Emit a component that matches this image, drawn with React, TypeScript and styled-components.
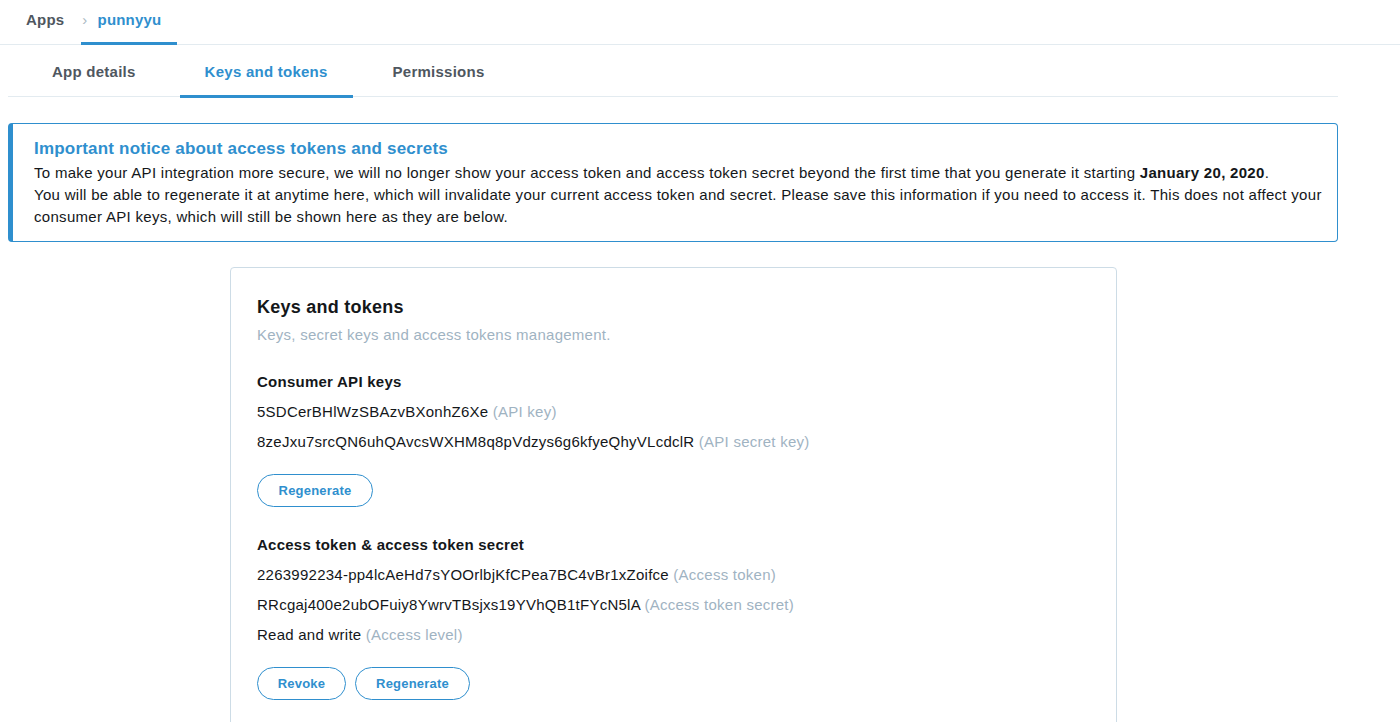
import styled, { createGlobalStyle } from "styled-components";

const blue = "#2f8fce";
const ink = "#14171a";
const muted = "#9fb3c2";

const GlobalStyle = createGlobalStyle`
  body {
    margin: 0;
    background: #fff;
    font-family: "Liberation Sans", Arial, sans-serif;
    color: ${ink};
  }
`;

const Page = styled.div`
  width: 1400px;
  height: 722px;
  overflow: hidden;
`;

const Breadcrumb = styled.div`
  display: flex;
  align-items: stretch;
  height: 44px;
  padding-left: 26px;
  border-bottom: 1px solid #e3ebf0;
`;

const Crumb = styled.div<{ $active?: boolean }>`
  display: flex;
  align-items: flex-start;
  padding: ${(p) => (p.$active ? "11px 16px 0 1px" : "11px 0 0 0")};
  margin-left: ${(p) => (p.$active ? "17px" : "0")};
  font-size: 15px;
  font-weight: bold;
  letter-spacing: 0.2px;
  color: ${(p) => (p.$active ? blue : "#4f5760")};
  border-bottom: 3px solid ${(p) => (p.$active ? blue : "transparent")};
  margin-bottom: -1px;
`;

const Chevron = styled.span`
  color: #aab8c2;
  font-weight: normal;
  margin-right: 10px;
`;

const Tabs = styled.div`
  display: flex;
  margin: 0 62px 0 8px;
  height: 51px;
  border-bottom: 1px solid #e3ebf0;
`;

const Tab = styled.div<{ $active?: boolean }>`
  display: flex;
  align-items: center;
  padding: 2px ${(p) => (p.$active ? "25px" : "44px")} 0;
  font-size: 15px;
  font-weight: bold;
  letter-spacing: 0.25px;
  color: ${(p) => (p.$active ? blue : "#4f5760")};
  border-bottom: 3px solid ${(p) => (p.$active ? blue : "transparent")};
  margin-bottom: -2px;
  &:last-child {
    padding-left: 40px;
  }
`;

const Notice = styled.div`
  margin: 26px 62px 0 8px;
  border: 1px solid ${blue};
  border-left: 5px solid ${blue};
  border-radius: 4px;
  padding: 14px 6px 13px 21px;
`;

const NoticeTitle = styled.div`
  font-size: 17px;
  font-weight: bold;
  letter-spacing: 0.2px;
  color: ${blue};
  line-height: 22px;
  margin-bottom: 2px;
`;

const NoticeText = styled.p`
  margin: 0;
  font-size: 15px;
  letter-spacing: 0.3px;
  line-height: 22px;
  color: ${ink};
`;

const Card = styled.div`
  margin: 25px 0 0 230px;
  width: 887px;
  box-sizing: border-box;
  border: 1px solid #cddce6;
  border-radius: 4px;
  padding: 27px 26px 40px 26px;
  letter-spacing: 0.25px;
`;

const CardTitle = styled.h2`
  margin: 0;
  font-size: 18px;
  font-weight: bold;
  line-height: 24px;
`;

const CardSub = styled.div`
  margin-top: 4px;
  font-size: 15px;
  line-height: 24px;
  color: ${muted};
`;

const SectionTitle = styled.h3<{ $gap: number }>`
  margin: ${(p) => p.$gap}px 0 0;
  font-size: 15px;
  font-weight: bold;
  line-height: 24px;
`;

const KeyRow = styled.div`
  margin-top: 6px;
  font-size: 15px;
  line-height: 24px;
  color: ${ink};
`;

const Hint = styled.span`
  color: ${muted};
`;

const Buttons = styled.div`
  display: flex;
  gap: 9px;
  margin-top: 20px;
`;

const PillButton = styled.button<{ $w: number }>`
  width: ${(p) => p.$w}px;
  height: 33px;
  border: 1px solid ${blue};
  border-radius: 17px;
  background: #fff;
  color: ${blue};
  font-family: "Liberation Sans", Arial, sans-serif;
  font-size: 13px;
  font-weight: bold;
  letter-spacing: 0.2px;
  cursor: pointer;
`;

export default function App() {
  return (
    <Page>
      <GlobalStyle />
      <Breadcrumb>
        <Crumb>Apps</Crumb>
        <Crumb $active>
          <Chevron>›</Chevron>
          punnyyu
        </Crumb>
      </Breadcrumb>
      <Tabs>
        <Tab>App details</Tab>
        <Tab $active>Keys and tokens</Tab>
        <Tab>Permissions</Tab>
      </Tabs>
      <Notice>
        <NoticeTitle>Important notice about access tokens and secrets</NoticeTitle>
        <NoticeText>
          To make your API integration more secure, we will no longer show your
          access token and access token secret beyond the first time that you
          generate it starting <b>January 20, 2020</b>.
          <br />
          You will be able to regenerate it at anytime here, which will
          invalidate your current access token and secret. Please save this
          information if you need to access it. This does not affect your
          consumer API keys, which will still be shown here as they are below.
        </NoticeText>
      </Notice>
      <Card>
        <CardTitle>Keys and tokens</CardTitle>
        <CardSub>Keys, secret keys and access tokens management.</CardSub>
        <SectionTitle $gap={23}>Consumer API keys</SectionTitle>
        <KeyRow>
          5SDCerBHlWzSBAzvBXonhZ6Xe <Hint>(API key)</Hint>
        </KeyRow>
        <KeyRow>
          8zeJxu7srcQN6uhQAvcsWXHM8q8pVdzys6g6kfyeQhyVLcdclR{" "}
          <Hint>(API secret key)</Hint>
        </KeyRow>
        <Buttons>
          <PillButton $w={116}>Regenerate</PillButton>
        </Buttons>
        <SectionTitle $gap={26}>Access token &amp; access token secret</SectionTitle>
        <KeyRow>
          2263992234-pp4lcAeHd7sYOOrlbjKfCPea7BC4vBr1xZoifce{" "}
          <Hint>(Access token)</Hint>
        </KeyRow>
        <KeyRow>
          RRcgaj400e2ubOFuiy8YwrvTBsjxs19YVhQB1tFYcN5lA{" "}
          <Hint>(Access token secret)</Hint>
        </KeyRow>
        <KeyRow>
          Read and write <Hint>(Access level)</Hint>
        </KeyRow>
        <Buttons>
          <PillButton $w={89}>Revoke</PillButton>
          <PillButton $w={115}>Regenerate</PillButton>
        </Buttons>
      </Card>
    </Page>
  );
}
